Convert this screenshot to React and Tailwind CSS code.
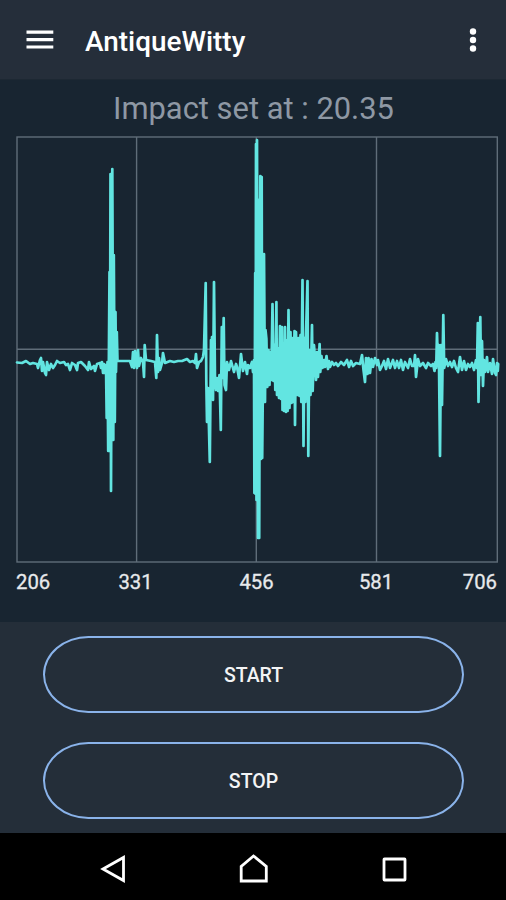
import React from "react";

const ticks = [
  { value: 206, x: 16, anchor: "start" },
  { value: 331, x: 135.5, anchor: "middle" },
  { value: 456, x: 256.5, anchor: "middle" },
  { value: 581, x: 376, anchor: "middle" },
  { value: 706, x: 497, anchor: "end" },
];

// Sensor samples as x,y pairs in chart units
const samples = `
17,362.5 22,363 26,361 30,364 33,363 37,364 38,368 40,360 41,358 42,371 43,362 45,373 46,375 47,362
49,370 51,364 53,368 55,365 57,361 60,363 64,362 66,365 68,364 70,370 72,363 75,365 77,370 78,363 81,362
85,366 88,370 89,362 91,369 94,366 95,371 97,364 100,363 101,368 102,362 103,373 104,364 105,373
106,365 106.7,418 107.5,362 108.2,451 109.5,272 109.8,451 110.5,174 111,491 112.3,169 113.3,440 113.8,255 114.8,422
115.5,312 116,372 116.8,332 117.5,361
124,361 130,361 132,367 133,352 134,368 135,351 137,368 138,350 139,366 141,358 143,362 144,377 144.7,345
146,360 151,361 155,362 156.3,378 157,335 158,372 159,358 160,370 162,363 163,353 165,363 170,361 174,362 178,361
182,361 187,359 190,362 193,361 195,363 196,354 197,368 199,362 201,361 203,357 204,350 205.7,283 206.3,380
207,422 208,388 209.8,462 211,340 211.6,398 212,337 213,400 214,282 215,380 216,390 217,378 218,391 219.5,375
220.8,430 221.8,327 222.3,378 223.7,318 224.5,385 226,390 227,362 229,370 231,361 234,372 236,364 237,367
239,378 241,354 243,371 245,362 247,374 248,365 250,368 252,362 253,372
254,360 254.4,493 255.2,273 255.6,494 256,144 256.5,500 257,140 258,538 258.8,200 259.2,538 260.3,176 261,459
261.7,177 262.2,458 263.5,320 264,254 265,402 265.5,330 266.4,339 267.3,387 268.5,350 269.5,385
270.5,352 271.3,380 272.5,304 273.5,381 274.5,345 275.3,390 276.4,302 277,395 278,348 279,398
280,326 281,399 282,327 282.5,410 283.5,345 284,411 285,327 286,412 287,340 287.6,411 288.5,310
289.5,408 290.5,332 291.5,403 292.5,338 293.5,402 294.5,331 295,425 296,332 297.5,395 298.5,338 299.5,396
300.5,335 301.3,402 302.5,280 303.5,446 304.5,338 305.3,402 306,335 307.5,281 308.3,456 309.3,350
310.5,395 312,325 312.7,391 314,345 315,360 316,380 317,352 318,377 319.6,344 320.3,372 321.5,356
322.5,368 324,360 325,367 326.5,356 328,369 329,361 330,367 332,362
334,365 336,363 338,366 341,362 344,365 347,360 349,367 351,361 353,366 356,363 360,364 362,355 363.5,370
365,382 366,358 367.5,374 368.5,358 370,373 371.5,359 373,367 375,358 377,365 378,360 380,370 382,366
384,361 386,369 388,359 390,368 393,360 395,368 397,361 399,368 401,360 403,370 405,362 408,368 410,359
412,366 414,366 415,355 416,377 418,359 420,366 423,363 426,368 428,363 431,366 433,364 434.5,371 435.5,362
436.2,368 437,333 438,366 438.8,345 440,456 441,345 442,405 443.3,315 444.2,368 446,359 448,366 450,362 452,367
454,361 456,368 458,372 460,357 462,370 464,361 466,370 468,364 470,367 472,363 474,370 476,360 477,368
477.8,323 478.5,402 480.3,317 481,375 482,341 483,386 484,360 485,372 487,357 488,372 490,363
492,374 493,359 495,373 496,375 497,363 498.2,364 497.8,371
`;

const MenuIcon = () => (
  <svg className="h-5 w-7" viewBox="0 0 28 20" stroke="#fff" strokeWidth="3.2">
    <path d="M0.5 2.2H27.3M0.5 9.6H27.3M0.5 17H27.3" />
  </svg>
);

const MoreIcon = () => (
  <svg className="h-6 w-2" viewBox="0 0 8 24" fill="#fff">
    <circle cx="4" cy="3.5" r="3.2" />
    <circle cx="4" cy="12" r="3.2" />
    <circle cx="4" cy="20.5" r="3.2" />
  </svg>
);

const Chart = () => (
  <svg className="block h-[496px] w-[506px]" viewBox="0 126 506 496">
    <g fill="none" stroke="#5f6d79" strokeWidth="1.4">
      <rect x="17" y="137" width="480.3" height="425" />
      <path d="M136.6 137V562M256.3 137V562M376.5 137V562M17 349.3H497" />
    </g>
    <polyline
      points={samples}
      fill="none"
      stroke="#62e5e1"
      strokeWidth="2.7"
      strokeLinecap="round"
      strokeLinejoin="round"
    />
    {ticks.map(tick => (
      <text
        key={tick.value}
        x={tick.x}
        y="589"
        textAnchor={tick.anchor}
        fill="#e8eaec"
        stroke="#e8eaec"
        strokeWidth="0.3"
        fontSize="20.3">
        {tick.value}
      </text>
    ))}
  </svg>
);

const ActionButton = ({ label }) => (
  <button
    type="button"
    className="h-[77px] w-[421px] rounded-[46px/39px] border-2 border-[#8ab3ea] pt-0.5 text-[19.5px] font-medium text-[#f3f4f5]">
    {label}
  </button>
);

const App = () => {
  return (
    <div className="flex h-[900px] w-[506px] flex-col overflow-hidden bg-[#182531] font-['Roboto',sans-serif]">
      <header className="flex h-20 shrink-0 items-center border-b border-[#1d2833] bg-[#252e3a] pr-[29px] pl-[26px]">
        <button type="button" aria-label="Menu">
          <MenuIcon />
        </button>
        <h1 className="ml-[31px] flex-1 pt-[5px] text-[27.9px] leading-8 font-medium text-white">AntiqueWitty</h1>
        <button type="button" aria-label="More options">
          <MoreIcon />
        </button>
      </header>

      <main className="h-[542px] shrink-0">
        <p className="h-[46px] pt-[11px] pl-px text-center text-[30.9px] leading-9 text-[#8e98a4]">
          Impact set at : 20.35
        </p>
        <Chart />
      </main>

      <section className="flex h-[211px] shrink-0 flex-col items-center gap-[29px] bg-[#242e39] pt-[14px] pl-px">
        <ActionButton label="START" />
        <ActionButton label="STOP" />
      </section>

      <nav className="h-[67px] shrink-0 bg-black">
        <svg className="block h-[67px] w-[506px]" viewBox="0 833 506 67" fill="none" stroke="#fff" strokeWidth="2.8">
          <path d="M103 869L123.5 857.5V880.5Z" />
          <path d="M241.2 881V866.5L253.5 856L266.3 866.5V881Z" />
          <rect x="384" y="859" width="21" height="21" rx="0.5" />
        </svg>
      </nav>
    </div>
  );
};

export default App;
